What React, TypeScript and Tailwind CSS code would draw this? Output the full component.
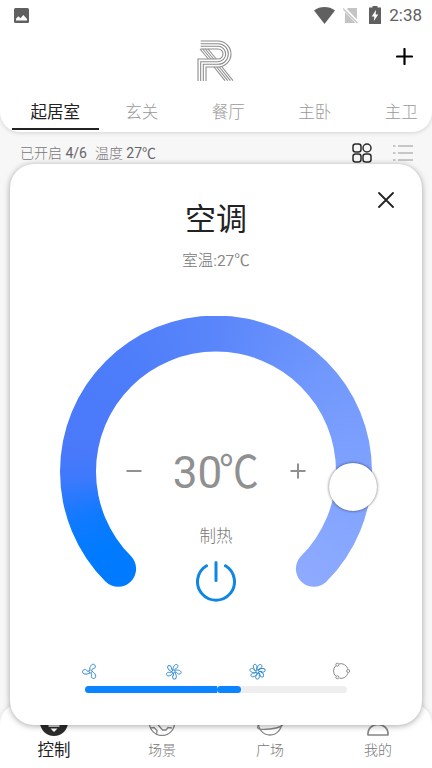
import { useState, type ReactNode } from "react";
import clsx from "clsx";

const rooms = ["起居室", "玄关", "餐厅", "主卧", "主卫"];

function StatusBar() {
  return (
    <div className="flex h-[30px] items-center justify-between pl-3.5 pr-2.5">
      <svg width="15" height="15" viewBox="0 0 15 15">
        <rect width="15" height="15" rx="1.5" fill="#606060" />
        <path d="M2 12.5v-1.7l2.4-2.6 2 2 3-3.2 3.6 4v1.5z" fill="#fff" />
      </svg>
      <div className="flex items-center text-[#606060]">
        <svg width="21" height="17" viewBox="0 0 21 17" fill="currentColor">
          <path d="M10.500 17 0 3.500C6-1.100 15-1.100 21 3.500z" />
        </svg>
        <svg className="ml-2" width="16" height="17" viewBox="0 0 16 17">
          <path d="M2 4 5 1h9v15H2z" fill="#c4c4c4" />
          <path d="M0 .5 15.500 16.500" stroke="#fff" strokeWidth="3.500" />
          <path d="M0 1.500 14.500 16" stroke="#c4c4c4" strokeWidth="1.300" />
        </svg>
        <svg className="ml-2.5" width="12" height="18" viewBox="0 0 12 18">
          <path d="M3.500 0h5v1.500H12V18H0V1.500h3.500z" fill="currentColor" />
          <path d="M7 4 2.700 10.500h2.600L4.800 15l4.500-6.500H6.700z" fill="#fff" />
        </svg>
        <span className="ml-2 text-[17px] leading-none">2:38</span>
      </div>
    </div>
  );
}

function Logo() {
  return (
    <svg width="38" height="42" viewBox="591 121 114 126" fill="none" stroke="#8c8c8c" strokeWidth="3.200">
      {[0, 1, 2, 3].map((i) => (
        <path
          key={i}
          d={`M602 ${124 + 8 * i}H654A${39 - 8 * i} ${39 - 8 * i} 0 0 1 654 ${202 - 8 * i}H${618 - 8 * i}V244`}
        />
      ))}
      {[0, 1, 2, 3].map((i) => (
        <path key={i} d={`M${600 + 8 * i} 148l25 30M${642 + 8 * i} 202l33 41`} />
      ))}
    </svg>
  );
}

function Header({ room, onRoom }: { room: string; onRoom: (r: string) => void }) {
  return (
    <header className="h-[132px] rounded-b-[20px] bg-white shadow-[0_1px_4px_rgba(0,0,0,0.15)]">
      <StatusBar />
      <div className="grid h-[64px] grid-cols-[1fr_auto_1fr] items-start pt-[10px]">
        <span />
        <Logo />
        <button aria-label="添加" className="mt-[8px] mr-[19px] justify-self-end">
          <svg width="17" height="17" viewBox="0 0 17 17" stroke="#000" strokeWidth="2.200" strokeLinecap="round">
            <path d="M8.500 1v15M1 8.500h15" />
          </svg>
        </button>
      </div>
      <nav className="flex h-[36px] overflow-hidden pl-3">
        {rooms.map((r) => (
          <button
            key={r}
            onClick={() => onRoom(r)}
            className={clsx(
              "h-[36px] w-[86.500px] shrink-0 border-b-2 pt-[2px] text-[16.500px] leading-[33px]",
              r === room ? "border-[#222] text-[#222]" : "border-transparent font-light text-[#999]"
            )}
          >
            {r}
          </button>
        ))}
      </nav>
    </header>
  );
}

function Summary() {
  return (
    <div className="flex h-[42px] items-center justify-between pr-[19px] pl-5">
      <p className="pt-px text-[14px] font-light text-[#777]">
        已开启 <span className="font-normal text-[#666]">4/6</span>
        <span className="ml-2">温度</span> <span className="font-normal text-[#666]">27℃</span>
      </p>
      <div className="flex items-center gap-[21px]">
        <svg width="20" height="20" viewBox="0 0 20 20" fill="none" stroke="#2b2b2b" strokeWidth="1.500">
          <rect x="1" y="1" width="8" height="8" rx="2.500" />
          <circle cx="15" cy="5" r="4" />
          <rect x="1" y="11" width="8" height="8" rx="2.500" />
          <rect x="11" y="11" width="8" height="8" rx="2.500" />
        </svg>
        <svg width="20" height="18" viewBox="0 0 20 18" stroke="#b8b8b8" strokeWidth="1.400">
          <path d="M0 2h2.500M5 2h15M0 9h2.500M5 9h15M0 16h2.500M5 16h15" />
        </svg>
      </div>
    </div>
  );
}

function Fan({ blades }: { blades: number }) {
  const wide = blades === 3;
  return (
    <svg width="17" height="17" viewBox="-8.500 -8.500 17 17" fill="none" stroke="#2b86d0" strokeWidth="0.900">
      <circle r="1.500" />
      {Array.from({ length: blades }, (_, i) => (
        <path
          key={i}
          transform={`rotate(${(360 / blades) * i + 12})`}
          d={
            wide
              ? "M-1.200-.9C-1.700-3-1.400-7.500 1.500-7.700 4.500-7.500 4.300-3.800 2-3.200.9-2.800.9-2 .9-1.200"
              : "M-.9-1.200C-1.500-3.500-.6-7.600 1.700-7.500 4-7.200 3.500-4.200 1.800-3.500.9-3 .8-2.200.8-1.300"
          }
        />
      ))}
    </svg>
  );
}

function AutoIcon() {
  return (
    <svg width="18" height="18" viewBox="-9 -9 18 18" fill="none" stroke="#8a8a8a" strokeWidth="1">
      <path d="M-1.800-7.200A7.400 7.400 0 0 1 6.800-2.200M6.900 2.300A7.400 7.400 0 0 1-1.500 7.300M-5.400 5.100A7.400 7.400 0 0 1-5.400-5.100" />
      <circle cx="-3.700" cy="-6.300" r="1.500" />
      <circle cx="7.200" cy="0" r="1.500" />
      <circle cx="-3.700" cy="6.300" r="1.500" />
    </svg>
  );
}

function Dial({ value, onChange }: { value: number; onChange: (v: number) => void }) {
  return (
    <div className="relative mx-auto h-[312px] w-[312px]">
      <div className="absolute inset-0 bg-[conic-gradient(from_180deg,#007bff_0deg,#007bff_55deg,#107aff_71deg,#3f79fc_88deg,#4a79fa_100deg,#4d7dfa_140deg,#5a86fb_180deg,#7097fd_225deg,#7fa2ff_270deg,#8daaff_320deg)] [clip-path:path('M45.7,266.3A156,156,0,1,1,266.3,266.3A18,18,0,0,1,240.85,240.85A120,120,0,1,0,71.15,240.85A18,18,0,0,1,45.7,266.3Z')]" />
      <div className="absolute top-[147px] left-[269px] h-12 w-12 rounded-full bg-white shadow-[0_0_3px_rgba(0,0,0,0.6)]" />
      <div className="relative flex flex-col items-center pt-[127px]">
        <div className="flex h-[56px] items-center text-[#909090]">
          <button aria-label="降低" onClick={() => onChange(value - 1)}>
            <svg width="16" height="16" viewBox="0 0 16 16" stroke="currentColor" strokeWidth="2">
              <path d="M.5 8h15" />
            </svg>
          </button>
          <span className="flex w-[148px] justify-center pt-[5px] text-[44px] leading-none font-normal">
            {value}
            <span className="-mr-1 -ml-[3px] inline-block origin-left scale-x-[0.9]">℃</span>
          </span>
          <button aria-label="升高" onClick={() => onChange(value + 1)}>
            <svg width="16" height="16" viewBox="0 0 16 16" stroke="currentColor" strokeWidth="2">
              <path d="M.5 8h15M8 .5v15" />
            </svg>
          </button>
        </div>
        <span className="mt-[26px] text-[16.500px] leading-6 font-light text-[#777]">制热</span>
        <button aria-label="电源" className="mt-[11px]">
          <svg width="42" height="42" viewBox="0 0 42 42" fill="none" stroke="#0f86e6" strokeWidth="3" strokeLinecap="round">
            <path d="M21 2.500v18M11.500 5.800a18.500 18.500 0 1 0 19 0" />
          </svg>
        </button>
      </div>
    </div>
  );
}

function AirConditionerCard() {
  const [temp, setTemp] = useState(30);
  return (
    <section className="absolute inset-x-2.5 top-[164px] h-[561px] rounded-[24px] bg-white font-light shadow-[0_1px_6px_rgba(0,0,0,0.35)]">
      <button aria-label="关闭" className="absolute top-7 right-7">
        <svg width="16" height="16" viewBox="0 0 16 16" stroke="#222" strokeWidth="1.800" strokeLinecap="round">
          <path d="M1 1l14 14M15 1 1 15" />
        </svg>
      </button>
      <h1 className="pt-[35px] text-center text-[31px] leading-[42px] font-normal text-[#222]">空调</h1>
      <p className="mt-[9px] mb-[43.500px] text-center text-[15.500px] leading-[22px] text-[#777]">
        室温<span className="font-normal text-[#888]">:27℃</span>
      </p>
      <Dial value={temp} onChange={setTemp} />
      <div className="mx-[72px] mt-[34.500px] flex h-[18px] items-center justify-between">
        <Fan blades={3} />
        <Fan blades={5} />
        <Fan blades={7} />
        <AutoIcon />
      </div>
      <div className="mx-[75px] mt-[6px] flex h-[7px] overflow-hidden rounded-full bg-[#eee]">
        <div className="w-[132px] bg-[#0a84ff]" />
        <div className="w-6 rounded-full bg-[#0a84ff]" />
      </div>
    </section>
  );
}

function NavItem({ label, active, children }: { label: string; active?: boolean; children: ReactNode }) {
  return (
    <button className="flex flex-1 flex-col items-center">
      <svg width="28" height="28" viewBox="0 0 28 28" fill="none" stroke="#858585" strokeWidth="1.300">
        {children}
      </svg>
      <span
        className={clsx(
          "h-6 leading-6",
          active ? "mt-[3px] text-[16.500px] text-[#222]" : "mt-0.5 text-[14px] font-light text-[#777]"
        )}
      >
        {label}
      </span>
    </button>
  );
}

function BottomNav() {
  return (
    <nav className="flex h-[64px] rounded-t-[20px] bg-white pt-[4px] shadow-[0_-1px_4px_rgba(0,0,0,0.1)]">
      <NavItem label="控制" active>
        <circle cx="14" cy="14" r="14" fill="#2b2b2b" stroke="none" />
        <path d="M8.500 18h11" stroke="#fff" strokeWidth="1.500" />
        <path d="M10.500 20.500h7l-3.500 3.500z" fill="#fff" stroke="none" />
      </NavItem>
      <NavItem label="场景">
        <circle cx="14" cy="15" r="12.500" />
        <path d="M2.500 20l3.500-.5 3 3-.5 4M9 15.500l5.500 6.500h3.500l2-2.500 4 .5" />
      </NavItem>
      <NavItem label="广场">
        <circle cx="14" cy="15.500" r="11.500" />
        <path d="M3 16.500C-1 21.500 4 22 14 21S29 16.500 25.500 16" />
      </NavItem>
      <NavItem label="我的">
        <path d="M4 27c-.5-6.500 4-10.500 10-10.500S24.500 20.500 24 27z" strokeWidth="1.700" strokeLinejoin="round" />
      </NavItem>
    </nav>
  );
}

export default function App() {
  const [room, setRoom] = useState(rooms[0]);
  return (
    <div className="relative flex h-[768px] w-[432px] flex-col overflow-hidden bg-[#f7f7f7] font-['Roboto','Noto_Sans_CJK_SC',sans-serif]">
      <Header room={room} onRoom={setRoom} />
      <Summary />
      <div className="flex-1" />
      <BottomNav />
      <AirConditionerCard />
    </div>
  );
}
